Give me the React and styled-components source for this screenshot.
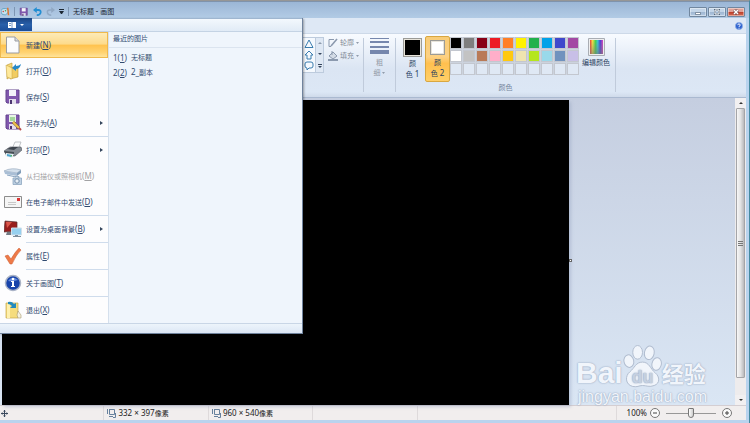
import React from "react";
import styled, { createGlobalStyle, css } from "styled-components";

const Global = createGlobalStyle`
  * { box-sizing: border-box; }
  body { margin: 0; }
  button { font: inherit; color: inherit; margin: 0; padding: 0; border: 0; background: none; }
  svg { display: block; flex: none; }
`;

const Window = styled.div`
  position: relative;
  display: flex;
  flex-direction: column;
  min-height: 100vh;
  border-top: 1px solid #969696;
  border-right: 1px solid #45899f;
  background: #b9d3ee;
  color: #2a3f5f;
  font: 7px/10px "Noto Sans", "Noto Sans CJK SC", sans-serif;
`;
const Latin = styled.span`
  font-size: 8px;
`;

/* Title bar */
const TitleBar = styled.header`
  display: flex;
  align-items: center;
  height: 17px;
  padding: 3px 4px 0 1px;
  border-top: 1px solid #7f93ac;
  background: linear-gradient(#9bb6d6, #b2cbe5);
`;
const QuickAccess = styled.div`
  display: flex;
  align-items: center;
  gap: 4px;
  flex: 1;
`;
const Rule = styled.span`
  width: 1px;
  height: 9px;
  background: #7d95b2;
`;
const Title = styled.h1`
  margin: 0;
  font: inherit;
  color: #1c2733;
  white-space: nowrap;
`;
const WindowButtons = styled.div`
  display: flex;
  gap: 1px;
`;
const WindowButton = styled.button`
  display: flex;
  align-items: center;
  justify-content: center;
  width: 18px;
  height: 10px;
  border: 1px solid #71879f;
  border-radius: 1px;
  box-shadow: inset 0 0 0 1px #ffffff66;
  background: ${(p) =>
    p.$close
      ? "linear-gradient(#e0a197 45%, #bd3c27 50%, #d3705a)"
      : "linear-gradient(#c3d5e8 45%, #9db5d0 50%, #b4cae2)"};
`;

/* Tabs */
const TabRow = styled.nav`
  display: flex;
  justify-content: flex-end;
  align-items: center;
  height: 15px;
  margin-right: 3px;
  padding-right: 3px;
  background: #dee8f5;
`;

/* Ribbon */
const Ribbon = styled.section`
  display: flex;
  height: 65px;
  margin-right: 3px;
  padding: 3px 0 0 303px;
  border-top: 1px solid #cdd9e8;
  border-bottom: 1px solid #aab9d0;
  background: linear-gradient(#f8fbff, #dbe5f3 55%, #dce7f5 92%, #cfdaea);
  box-shadow: 0 1px 0 #c5d2e4;
`;
const Gallery = styled.div`
  display: flex;
  width: 21px;
  height: 36px;
  border: 1px solid #bdcbdd;
  border-left: 0;
  background: #f5f9fe;
`;
const GalleryColumn = styled.div`
  display: flex;
  flex-direction: column;
  justify-content: space-around;
  align-items: center;
  flex: 1;
  ${(p) =>
    p.$scroll &&
    css`
      flex: 0 0 8px;
      border-left: 1px solid #bdcbdd;
      background: #dfe8f4;
    `}
`;
const IconButton = styled.button`
  display: flex;
`;
const ShapeOptions = styled.div`
  display: flex;
  flex-direction: column;
  gap: 3px;
  padding: 1px 4px;
`;
const OptionButton = styled.button`
  display: flex;
  align-items: center;
  gap: 2px;
  color: #858c97;
  white-space: nowrap;
`;
const Group = styled.div`
  display: flex;
  flex-direction: column;
  border-left: 1px solid #c0cbdb;
  height: 54px;
  margin-top: 1px;
`;
const SizeButton = styled.button`
  display: flex;
  flex-direction: column;
  align-items: center;
  width: 31px;
  color: #929aa6;
`;
const Columns = styled.div`
  display: flex;
  height: 46px;
  padding-left: 4px;
`;
const ColorButton = styled.button`
  display: flex;
  flex-direction: column;
  align-items: center;
  width: 25px;
  height: 46px;
  margin-top: -2px;
  padding-top: 1px;
  border: 1px solid ${(p) => (p.$active ? "#d9a740" : "transparent")};
  border-radius: 2px;
  background: ${(p) => (p.$active ? "linear-gradient(#f8cc78, #fdd183 45%, #ffc04f 60%, #ffcf68)" : "none")};
`;
const Sample = styled.span`
  width: ${(p) => p.$size}px;
  height: ${(p) => p.$size}px;
  margin: ${(p) => (p.$size < 18 ? "2px 0 3px" : "0 0 2px")};
  border: 1px solid #9b9b97;
  box-shadow: inset 0 0 0 1px #e8e4da;
  background: ${(p) => p.$color};
`;
const Palette = styled.div`
  display: grid;
  grid-template-columns: repeat(10, 12px);
  grid-auto-rows: 12px;
  gap: 1px;
  align-self: start;
  margin-top: -1px;
  background: #ccd3de;
`;
const Swatch = styled.button`
  border: 1px solid #c3c7cf;
  background: ${(p) => p.$color || "#dfe8f4"};
`;
const EditColors = styled.button`
  display: flex;
  flex-direction: column;
  align-items: center;
  gap: 2px;
  align-self: start;
  width: 34px;
  margin-right: 2px;
  white-space: nowrap;
`;
const GroupLabel = styled.div`
  margin-top: 1px;
  text-align: center;
  color: #73849b;
`;

/* Canvas */
const Workspace = styled.main`
  display: flex;
  flex: 1;
  margin-right: 3px;
  background: linear-gradient(#c5cee0, #dae6f4);
`;
const Viewport = styled.div`
  position: relative;
  display: flex;
  align-items: stretch;
  flex: 1;
  padding: 2px 0 0 2px;
`;
const Paper = styled.div`
  position: relative;
  width: 77.4%;
  background: #000;
  box-shadow: 2px 2px 3px #8d9cb866;
`;
const Handle = styled.span`
  position: absolute;
  right: -3px;
  top: 52%;
  width: 3px;
  height: 3px;
  border: 1px solid #666;
  background: #fff;
`;
const ScrollBar = styled.div`
  display: flex;
  flex-direction: column;
  width: 11px;
  background: #eeeced;
`;
const ScrollArrow = styled.button`
  display: flex;
  align-items: center;
  justify-content: center;
  height: 10px;
  background: #f2f0f1;
`;
const Thumb = styled.div`
  display: flex;
  align-items: center;
  justify-content: center;
  flex: 1;
  margin: 0 1px 17px;
  border: 1px solid #a5a5a8;
  border-radius: 1px;
  background: linear-gradient(90deg, #f7f7f7, #e3e3e4 50%, #b9b9bc);
`;

/* Watermark */
const Watermark = styled.div`
  position: absolute;
  right: 26px;
  bottom: -1px;
  width: 133px;
  color: #f1f5fb;
  text-shadow: 0 0 1px #9dacc4, 0 0 2px #9dacc4;
`;
const Brand = styled.div`
  display: flex;
  align-items: flex-end;
  font: bold 30px/30px "Liberation Sans", "Noto Sans CJK SC", sans-serif;
`;
const BrandChinese = styled.span`
  font: bold 22px/32px "Noto Sans CJK SC", sans-serif;
`;
const Address = styled.div`
  padding-left: 2px;
  font: 16px/18px "Liberation Sans", sans-serif;
`;

/* Status bar */
const StatusBar = styled.footer`
  display: flex;
  align-items: stretch;
  height: 15px;
  margin: 0 3px 3px 0;
  border-top: 1px solid #d4ced2;
  background: #f1eeee;
  color: #222;
`;
const StatusCell = styled.div`
  display: flex;
  align-items: center;
  gap: 2px;
  flex: ${(p) => (p.$grow ? "1" : "0 0 14%")};
  padding-left: ${(p) => (p.$first ? "1px" : "3px")};
  border-right: 1px solid #dedadb;
  white-space: nowrap;
`;
const Zoom = styled.div`
  display: flex;
  align-items: center;
  gap: 3px;
  padding: 0 14px 0 10px;
`;
const ZoomSlider = styled.input`
  appearance: none;
  width: 50px;
  height: 12px;
  margin: 0 3px;
  background: linear-gradient(#989898, #989898) center / 100% 1px no-repeat;
  &::-webkit-slider-thumb {
    appearance: none;
    width: 6px;
    height: 10px;
    border: 1px solid #777;
    border-radius: 1px 1px 3px 3px;
    background: linear-gradient(90deg, #fff, #ccc);
  }
`;

/* Application menu */
const Menu = styled.aside`
  position: absolute;
  left: 0;
  top: 17px;
  width: 303px;
  border: 1px solid #70839d;
  border-left: 0;
  border-top: 0;
  background: #eff5fc;
  box-shadow: 1px 1px 2px #00000055;
`;
const MenuHead = styled.div`
  height: 14px;
  border-top: 1px solid #9fb6d0;
  border-bottom: 1px solid #c4d3e4;
  background: linear-gradient(#f3f8fd, #e1ebf6);
`;
const FileButton = styled.button`
  display: flex;
  align-items: center;
  justify-content: center;
  gap: 4px;
  width: 32px;
  height: 13px;
  margin-top: -1px;
  background: linear-gradient(#1b4483, #285fa9 50%, #1a4d99);
`;
const MenuBody = styled.div`
  display: flex;
`;
const Commands = styled.div`
  flex: 0 0 109px;
  border-right: 1px solid #d5e0ed;
  background: #fdfdfe;
`;
const Command = styled.button`
  display: flex;
  align-items: center;
  width: 100%;
  height: 26px;
  padding: 0 5px 0 4px;
  text-align: left;
  white-space: nowrap;
  color: ${(p) => (p.disabled ? "#a2a2a4" : "#304a70")};
  ${(p) =>
    p.$active &&
    css`
      border: 1px solid #efb94d;
      padding: 0 4px 0 3px;
      background: linear-gradient(#fdebb7, #fddb8c 45%, #ffc34f 52%, #ffd270 80%, #ffe39a);
    `}
`;
const CommandText = styled.span`
  flex: 1;
  margin-left: 4px;
`;
const Separator = styled.hr`
  height: 1px;
  margin: 0 0 0 26px;
  border: 0;
  background: #cfdcec;
`;
const Recent = styled.section`
  flex: 1;
`;
const RecentTitle = styled.h2`
  margin: 0;
  padding: 2px 4px 3px;
  border-bottom: 1px solid #dbe4ef;
  font: inherit;
  color: #304a70;
`;
const RecentItem = styled.button`
  display: flex;
  align-items: center;
  gap: 4px;
  width: 100%;
  height: 15px;
  margin-top: ${(p) => (p.$first ? "2px" : "0")};
  padding-left: 4px;
  color: #304a70;
`;
const MenuFoot = styled.div`
  height: 10px;
  border-top: 1px solid #c9d6e6;
  background: linear-gradient(#edf4fb, #dce7f5);
`;

const Arrow = ({ d = "M0 0H4L2 2Z", c = "#34455c", w = 4, h = 2 }) => (
  <svg width={w} height={h} viewBox={`0 0 ${w} ${h}`} aria-hidden="true"><path d={d} fill={c} /></svg>
);
const Icon = ({ size = 18, box = 18, children }) => (
  <svg width={size} height={size} viewBox={`0 0 ${box} ${box}`} fill="none" aria-hidden="true">{children}</svg>
);

const Floppy = ({ size }) => (
  <Icon size={size}>
    <path d="M2 2H15V15H3L2 14Z" fill="#8057ad" stroke="#65448f" />
    <path d="M5 2H12V8H5Z" fill="#f4f3fa" />
    <path d="M5 11H12V16H5Z" fill="#e3dfec" />
    <path d="M6 12H8V16H6Z" fill="#4c3670" />
  </Icon>
);
const icons = {
  page: <Icon><path d="M2.500 1H11L15 5V17H2.500Z" fill="#fbfcfd" stroke="#9b9da1" /><path d="M11 1V5H15" fill="#dadde2" stroke="#9b9da1" /></Icon>,
  open: <Icon><path d="M3 3L8 1V14L3 17Z" fill="#f6d877" stroke="#c4a041" strokeWidth=".7" /><path d="M5 5L14 6V15L6 17Z" fill="#f1cc62" stroke="#b9932f" strokeWidth=".6" /><path d="M2 3L8 6V17L3 15Z" fill="#ffe99b" stroke="#c4a041" strokeWidth=".5" /><path d="M17 2Q16 7 12 7V9L8 6L12 2V4Q15 4 17 2Z" fill="#2688c8" /></Icon>,
  save: <Floppy />,
  saveAs: <Icon><path d="M2 1H15V15H3L2 14Z" fill="#8057ad" stroke="#65448f" /><path d="M5 1H12V8H5Z" fill="#e7f5e5" /><path d="M6 3H11V7H6Z" fill="#a4d69c" /><path d="M5 10H12V15H5Z" fill="#e4ddec" /><path d="M6 12H8V15H6Z" fill="#4c3670" /><path d="M9 8L15 14" stroke="#81602a" strokeWidth="3" /><path d="M9 8L15 14" stroke="#f0c14c" strokeWidth="2" /><path d="M15 14L17 16" stroke="#b84b49" strokeWidth="2" /></Icon>,
  print: <Icon><path d="M8 8L11 1H17L14 9Z" fill="#fafbfc" stroke="#a8adb2" strokeWidth=".7" /><path d="M0 10L6 6H17L18 9L11 15H3Z" fill="#848b93" stroke="#50565e" strokeWidth=".6" /><path d="M3 8L8 6H14L10 9Z" fill="#3c434c" /><path d="M0 10L10 11V15L2 14Z" fill="#464d55" /><path d="M2 12L10 13L8 17L1 15Z" fill="#e8f2f6" /><path d="M3 13L8 14L7 16L3 15Z" fill="#50a5cd" /><path d="M6 14H8V16" fill="#5ab765" /></Icon>,
  scan: <Icon><path d="M0 4Q8 0 17 3L13 6Z" fill="#d4e0ec" stroke="#9caec2" strokeWidth=".7" /><path d="M0 4L13 6V9L1 7Z" fill="#a9bed5" /><path d="M13 6L17 3V6L13 9Z" fill="#819db9" /><path d="M3 8L12 10" stroke="#8ba6c2" /><path d="M9 11H17.500V17.500H9ZM11 9.500H15V11" fill="#bfd1e3" stroke="#829db9" strokeWidth=".7" /><circle cx="13" cy="14" r="2.200" fill="#e7eff6" stroke="#7892ae" /></Icon>,
  mail: <Icon><path d="M.5 3.500H17.500V14.500H.5Z" fill="#f5f5f5" stroke="#8c8c8c" /><path d="M13 5H16V8H13Z" fill="#dc3535" /><path d="M4 9.500H12M4 11.500H12" stroke="#c8c8c8" /></Icon>,
  desktop: <Icon><path d="M1 1L13 2V11L0 12Z" fill="#981e1d" stroke="#563030" strokeWidth=".7" /><path d="M2 2L8 2L3 8Z" fill="#db574b" /><path d="M3 12H9V15H2Z" fill="#727b84" /><path d="M7.500 8H17.500V15H7.500Z" fill="#96d0ef" stroke="#d1dfea" /><path d="M11 15H14V16H17V17H9V16H11Z" fill="#7d8e9d" /></Icon>,
  check: <Icon><path d="M1 9L4 8L7 12Q11 5 15 1L17 3Q12 8 8 17H6Z" fill="#ee7a48" stroke="#c9572d" strokeWidth=".5" /></Icon>,
  info: <Icon><circle cx="9" cy="9" r="7.500" fill="#1743aa" stroke="#aab3c6" strokeWidth="1.500" /><path d="M4 7Q8 1 14 6Q8 8 4 7Z" fill="#668cdd" /><circle cx="9" cy="5" r="1.300" fill="#fff" /><path d="M7 7H10V12H11V13H7V12H8V8H7Z" fill="#fff" /></Icon>,
  exit: <Icon><path d="M2 2H14V17H2Z" fill="#f5dc7d" stroke="#c6a74a" strokeWidth=".7" /><path d="M3 3L6 2V17H3Z" fill="#fff0ad" /><path d="M4 1Q8 0 10 3L12 2V7H6L8 5Q6 3 4 3Z" fill="#238abf" /><path d="M14 10L17 14V17H14L13 14Z" fill="#f4f0df" stroke="#a89b70" strokeWidth=".6" /></Icon>,
};

const commands = [
  { icon: "page", text: "新建", key: "N", active: true },
  { icon: "open", text: "打开", key: "O" },
  { icon: "save", text: "保存", key: "S" },
  { icon: "saveAs", text: "另存为", key: "A", more: true, end: true },
  { icon: "print", text: "打印", key: "P", more: true },
  { icon: "scan", text: "从扫描仪或照相机", key: "M", disabled: true },
  { icon: "mail", text: "在电子邮件中发送", key: "D", end: true },
  { icon: "desktop", text: "设置为桌面背景", key: "B", more: true, end: true },
  { icon: "check", text: "属性", key: "E", end: true },
  { icon: "info", text: "关于画图", key: "T", end: true },
  { icon: "exit", text: "退出", key: "X" },
];
const palette = [
  "#000000", "#7f7f7f", "#880015", "#ed1c24", "#ff7f27", "#fff200", "#22b14c", "#00a2e8", "#3f48cc", "#a349a4",
  "#ffffff", "#c3c3c3", "#b97a57", "#ffaec9", "#ffc90e", "#efe4b0", "#b5e61d", "#99d9ea", "#7092be", "#c8bfe7",
  ...Array(10).fill(""),
];

const InlineArrow = styled.svg`
  display: inline-block;
  vertical-align: middle;
`;
const SizeIcon = () => (
  <Icon size={9} box={9}>
    <path d="M.5 0V5M2 .5H7.500V5.500H2.500V0M2 7.500H6M8.500 4V8.500H6" stroke="#66819d" />
  </Icon>
);

export default function App() {
  return (
    <>
      <Global />
      <Window>
        <TitleBar>
          <QuickAccess>
            <Icon size={9} box={12}><path d="M0 5Q1 1 6 2Q12 3 9 8Q6 12 2 10Q0 8 0 5Z" fill="#c5e1ef" stroke="#4b95ba" /><circle cx="3" cy="6" r="1" fill="#cf493f" /><circle cx="6" cy="5" r="1" fill="#45a35a" /><path d="M9 1L10 11" stroke="#df7830" strokeWidth="2" /></Icon>
            <Rule />
            <IconButton aria-label="保存"><Floppy size={10} /></IconButton>
            <IconButton aria-label="撤消"><Icon size={9} box={12}><path d="M2 4H7Q11 4 10 8Q9 11 5 11" stroke="#238ed2" strokeWidth="2.400" /><path d="M0 4L5 0V8Z" fill="#238ed2" /></Icon></IconButton>
            <IconButton aria-label="重做"><Icon size={9} box={12}><path d="M10 4H5Q1 4 2 8Q3 11 7 11" stroke="#91a8c3" strokeWidth="2" /><path d="M12 4L7 0V8Z" fill="#91a8c3" /></Icon></IconButton>
            <IconButton aria-label="自定义"><Arrow w={5} h={5} c="#1c2733" d="M0 0H5V1H0ZM0 2H5L3 5H2Z" /></IconButton>
            <Rule />
            <Title>无标题 <Latin>-</Latin> 画图</Title>
          </QuickAccess>
          <WindowButtons>
            <WindowButton aria-label="最小化"><Icon size={6} box={6}><path d="M.5 3.500H5.500V5.500H.5Z" fill="#fff" stroke="#5c6e82" strokeWidth=".7" /></Icon></WindowButton>
            <WindowButton aria-label="最大化"><Icon size={6} box={6}><path d="M1 1H5V5H1Z" stroke="#53667c" strokeWidth="2" /><path d="M1 1H5V5H1Z" stroke="#fff" /></Icon></WindowButton>
            <WindowButton aria-label="关闭" $close><Icon size={6} box={6}><path d="M1 1L5 5M5 1L1 5" stroke="#6c4544" strokeWidth="2.600" /><path d="M1 1L5 5M5 1L1 5" stroke="#fff" strokeWidth="1.500" /></Icon></WindowButton>
          </WindowButtons>
        </TitleBar>

        <TabRow>
          <IconButton aria-label="帮助"><Icon size={8} box={10}><circle cx="5" cy="5" r="4.500" fill="#2e62cf" stroke="#8eaee5" /><path d="M3.500 4Q3.500 2.300 5 2.300T6.500 4Q6.500 5 5 5.500V6.300M5 7.200V8.400" stroke="#fff" strokeWidth="1.200" /></Icon></IconButton>
        </TabRow>

        <Ribbon>
          <Gallery>
            <GalleryColumn>
              <IconButton aria-label="三角形"><Icon size={10} box={10}><path d="M5 1L9 8.500H1Z" stroke="#3a7cae" /></Icon></IconButton>
              <IconButton aria-label="箭头"><Icon size={10} box={10}><path d="M5 1L9 5H7V9H3V5H1Z" stroke="#3a7cae" /></Icon></IconButton>
              <IconButton aria-label="标注"><Icon size={10} box={10}><path d="M3 1H7Q9 1 9 3V5Q9 7 7 7H5L3 9V7Q1 7 1 5V3Q1 1 3 1Z" stroke="#3a7cae" /></Icon></IconButton>
            </GalleryColumn>
            <GalleryColumn $scroll>
              <IconButton aria-label="向上"><Arrow d="M0 2H4L2 0Z" c="#8d9aac" /></IconButton>
              <IconButton aria-label="向下"><Arrow /></IconButton>
              <IconButton aria-label="更多"><Arrow h={4} d="M0 0H4V1H0ZM0 2H4L2 4Z" /></IconButton>
            </GalleryColumn>
          </Gallery>
          <ShapeOptions>
            <OptionButton><Icon size={10} box={10}><path d="M6 1.500H1V8.500H3" stroke="#8b99ae" /><path d="M9 1L3 8" stroke="#8b99ae" strokeWidth="1.600" /></Icon>轮廓<Arrow w={3} d="M0 0H3L1.500 2Z" c="#919dac" /></OptionButton>
            <OptionButton><Icon size={10} box={10}><path d="M1 5L5 1L9 5L5 8ZM4 0V4" fill="#d3dbe6" stroke="#8b99ae" /><path d="M0 9H10" stroke="#8b99ae" strokeWidth="2" /></Icon>填充<Arrow w={3} d="M0 0H3L1.500 2Z" c="#919dac" /></OptionButton>
          </ShapeOptions>
          <Group>
            <SizeButton>
              <svg width="19" height="20" viewBox="0 0 19 20" stroke="#7687ad" aria-hidden="true"><path d="M0 .5H19" /><path d="M0 4H19" strokeWidth="2" /><path d="M0 9H19" strokeWidth="2" /><path d="M0 14H19" strokeWidth="4" /></svg>
              粗<span>细 <InlineArrow width="3" height="2" viewBox="0 0 3 2" aria-hidden="true"><path d="M0 0H3L1.500 2Z" fill="#919dac" /></InlineArrow></span>
            </SizeButton>
          </Group>
          <Group>
            <Columns>
              <ColorButton><Sample $size={19} $color="#000" />颜<span>色 <Latin>1</Latin></span></ColorButton>
              <ColorButton $active><Sample $size={15} $color="#fff" />颜<span>色 <Latin>2</Latin></span></ColorButton>
              <Palette>
                {palette.map((c, i) => <Swatch key={i} $color={c} aria-label={c || "空"} />)}
              </Palette>
              <EditColors>
                <svg width="17" height="18" viewBox="0 0 17 18" aria-hidden="true">
                  <defs>
                    <linearGradient id="hue"><stop stopColor="#f03a35" /><stop offset=".2" stopColor="#f5e441" /><stop offset=".42" stopColor="#45d34e" /><stop offset=".6" stopColor="#36c4dc" /><stop offset=".78" stopColor="#4140d6" /><stop offset="1" stopColor="#df43bd" /></linearGradient>
                    <linearGradient id="shade" x2="0" y2="1"><stop stopColor="#888" stopOpacity="0" /><stop offset="1" stopColor="#777" stopOpacity=".6" /></linearGradient>
                  </defs>
                  <path d="M.5 .5H16.500V17.500H.5Z" fill="#eee" stroke="#a9adb4" />
                  <path d="M2 2H15V16H2Z" fill="url(#hue)" /><path d="M2 2H15V16H2Z" fill="url(#shade)" />
                </svg>
                编辑颜色
              </EditColors>
            </Columns>
            <GroupLabel>颜色</GroupLabel>
          </Group>
          <Group />
        </Ribbon>

        <Workspace>
          <Viewport>
            <Paper><Handle /></Paper>
            <Watermark>
              <Brand>
                Bai
                <svg width="39" height="44" viewBox="0 0 40 44" fill="#f1f5fb" stroke="#b0bccf" strokeWidth="1" aria-hidden="true">
                  <ellipse cx="6" cy="17" rx="5" ry="6.500" transform="rotate(-12 6 17)" />
                  <ellipse cx="15" cy="8" rx="5" ry="7" />
                  <ellipse cx="27" cy="8.500" rx="5" ry="7" transform="rotate(12 27 8.5)" />
                  <ellipse cx="34.500" cy="20" rx="4.800" ry="6.500" transform="rotate(12 34.5 20)" />
                  <path d="M20 18C13 18 12 24 7 28C2 32 2 41 10 43C15 44 16 42 20 42C24 42 27 44 32 42C38 40 38 33 33 29C28 25 27 18 20 18Z" />
                  <text x="20" y="39" textAnchor="middle" fontFamily="Liberation Sans" fontSize="18" fontWeight="bold" fill="#c5d0e1" stroke="none">du</text>
                </svg>
                <BrandChinese>经验</BrandChinese>
              </Brand>
              <Address>jingyan.baidu.com</Address>
            </Watermark>
          </Viewport>
          <ScrollBar>
            <ScrollArrow aria-label="向上滚动"><Arrow d="M0 2H4L2 0Z" c="#333" /></ScrollArrow>
            <Thumb><Icon size={5} box={5}><path d="M0 .5H5M0 2.500H5M0 4.500H5" stroke="#777" /></Icon></Thumb>
            <ScrollArrow aria-label="向下滚动"><Arrow c="#333" /></ScrollArrow>
          </ScrollBar>
        </Workspace>

        <StatusBar>
          <StatusCell $first><Icon size={7} box={7}><path d="M3.500 0V7M0 3.500H7" stroke="#39485d" /><path d="M2 1.500L3.500 0L5 1.500ZM2 5.500L3.500 7L5 5.500ZM1.500 2L0 3.500L1.500 5ZM5.500 2L7 3.500L5.500 5Z" fill="#39485d" /></Icon></StatusCell>
          <StatusCell><SizeIcon /><span><Latin>332 × 397</Latin>像素</span></StatusCell>
          <StatusCell><SizeIcon /><span><Latin>960 × 540</Latin>像素</span></StatusCell>
          <StatusCell />
          <StatusCell $grow />
          <Zoom>
            <Latin>100%</Latin>
            <IconButton aria-label="缩小"><Icon size={10} box={10}><circle cx="5" cy="5" r="4.500" fill="#fafafa" stroke="#777" /><path d="M3 5H7" stroke="#444" /></Icon></IconButton>
            <ZoomSlider type="range" min="0" max="100" defaultValue="50" aria-label="缩放" />
            <IconButton aria-label="放大"><Icon size={10} box={10}><circle cx="5" cy="5" r="4.500" fill="#fafafa" stroke="#777" /><path d="M3 5H7M5 3V7" stroke="#444" /></Icon></IconButton>
          </Zoom>
        </StatusBar>

        <Menu>
          <MenuHead>
            <FileButton aria-label="文件">
              <Icon size={8} box={8}><path d="M0 1H8V7H0Z" fill="#fff" /><path d="M1 2.500H3M1 4.500H3M4 1V7" stroke="#7798c5" /></Icon>
              <Arrow c="#fff" />
            </FileButton>
          </MenuHead>
          <MenuBody>
            <Commands>
              {commands.map((c) => (
                <React.Fragment key={c.key}>
                  <Command $active={c.active} disabled={c.disabled}>
                    {icons[c.icon]}
                    <CommandText>{c.text}<Latin>(<u>{c.key}</u>)</Latin></CommandText>
                    {c.more && <Arrow w={3} h={4} d="M0 0V4L3 2Z" />}
                  </Command>
                  {c.end && <Separator />}
                </React.Fragment>
              ))}
            </Commands>
            <Recent>
              <RecentTitle>最近的图片</RecentTitle>
              <RecentItem $first><Latin>1(<u>1</u>)</Latin><span>无标题</span></RecentItem>
              <RecentItem><Latin>2(<u>2</u>)</Latin><span><Latin>2_</Latin>副本</span></RecentItem>
            </Recent>
          </MenuBody>
          <MenuFoot />
        </Menu>
      </Window>
    </>
  );
}
